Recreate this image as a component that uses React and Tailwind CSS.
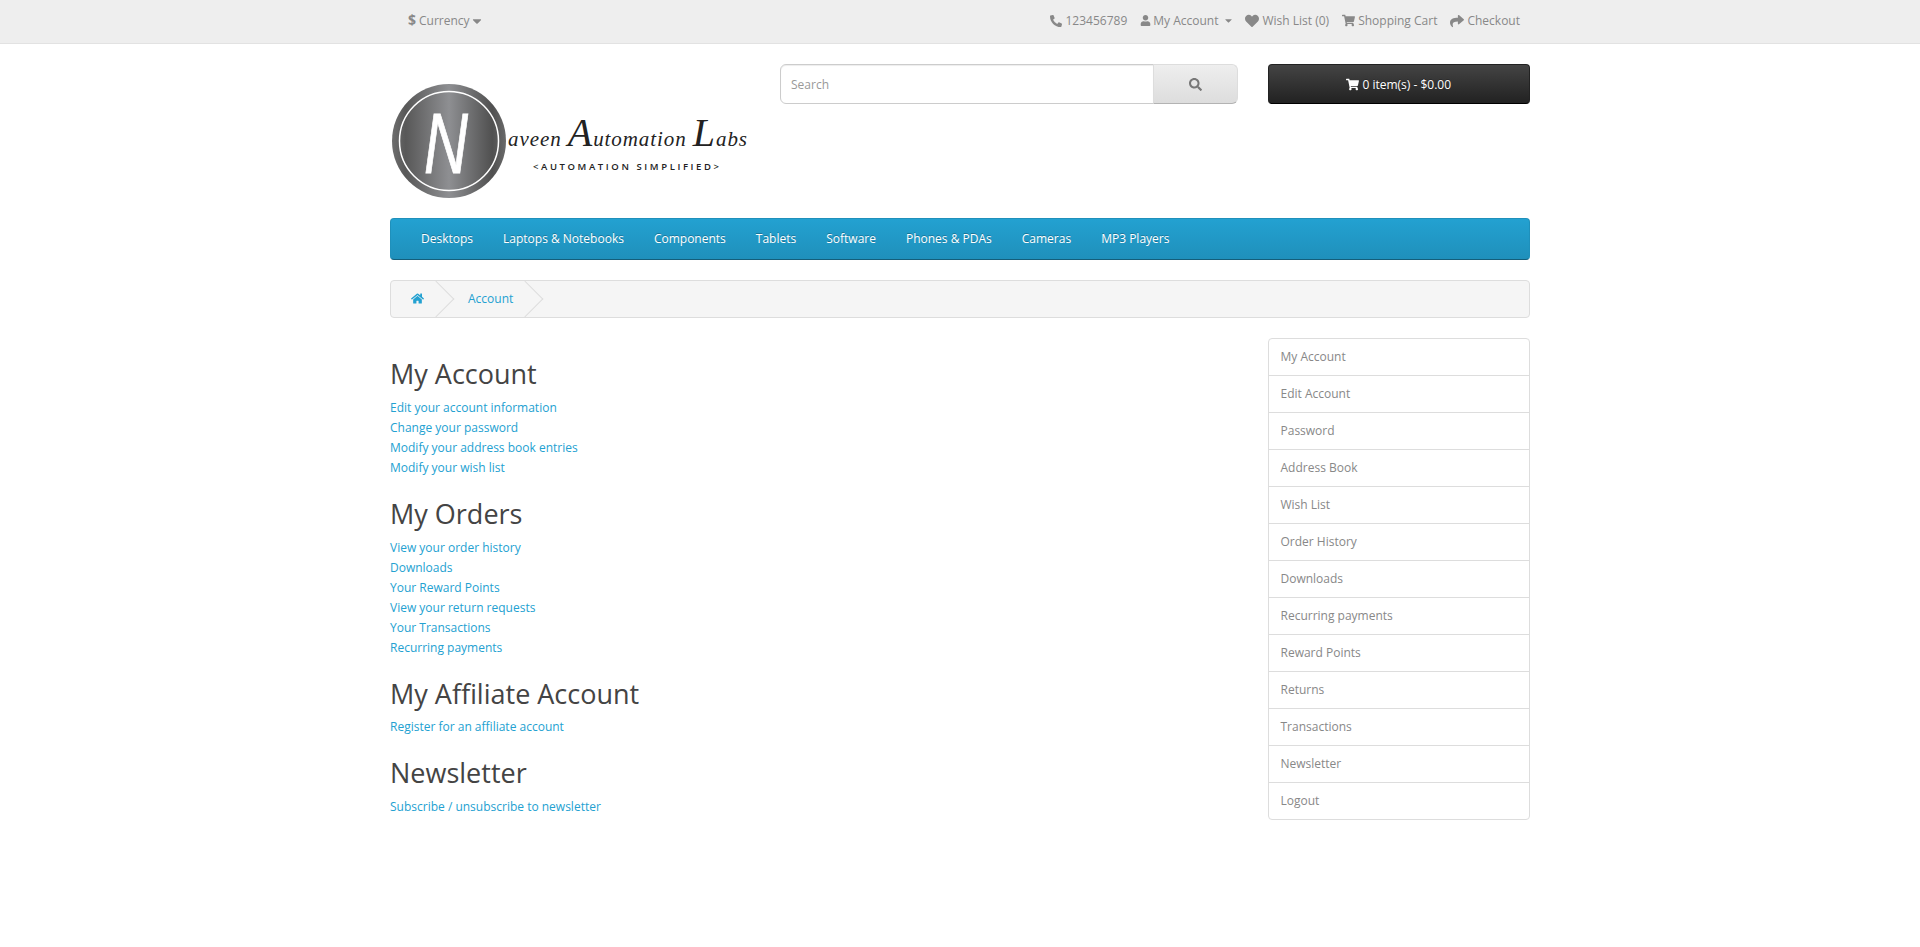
import React from 'react'
import { FaPhoneAlt, FaUser, FaHeart, FaShoppingCart, FaShare, FaSearch, FaHome, FaCaretDown } from 'react-icons/fa'

const navItems = ['Desktops', 'Laptops & Notebooks', 'Components', 'Tablets', 'Software', 'Phones & PDAs', 'Cameras', 'MP3 Players']

const sections = [
  { title: 'My Account', links: ['Edit your account information', 'Change your password', 'Modify your address book entries', 'Modify your wish list'] },
  { title: 'My Orders', links: ['View your order history', 'Downloads', 'Your Reward Points', 'View your return requests', 'Your Transactions', 'Recurring payments'] },
  { title: 'My Affiliate Account', links: ['Register for an affiliate account'] },
  { title: 'Newsletter', links: ['Subscribe / unsubscribe to newsletter'] },
]

const sideLinks = ['My Account', 'Edit Account', 'Password', 'Address Book', 'Wish List', 'Order History', 'Downloads', 'Recurring payments', 'Reward Points', 'Returns', 'Transactions', 'Newsletter', 'Logout']

const Logo = () => (
  <svg width="360" height="134" viewBox="0 0 360 134" className="block overflow-visible">
    <defs>
      <linearGradient id="metal" x1="0" y1="0" x2="1" y2="0">
        <stop offset="0" stopColor="#6e6e6e" />
        <stop offset="0.12" stopColor="#585858" />
        <stop offset="0.5" stopColor="#8e8f92" />
        <stop offset="0.88" stopColor="#505050" />
        <stop offset="1" stopColor="#6a6a6a" />
      </linearGradient>
    </defs>
    <circle cx="59" cy="77" r="57" fill="url(#metal)" />
    <circle cx="59" cy="77" r="49.5" fill="none" stroke="#ffffff" strokeWidth="1.5" />
    <text textAnchor="middle" fill="#ffffff" stroke="#ffffff" strokeWidth="0.8" fontFamily="'Liberation Sans', sans-serif" fontSize="78" fontStyle="italic" transform="translate(56 109) scale(0.78 1.1)">N</text>
    <text x="118" y="82" fill="#222222" fontFamily="'Liberation Serif', serif" fontSize="21" fontStyle="italic" textLength="239" lengthAdjust="spacing">
      aveen <tspan fontSize="40">A</tspan>utomation <tspan fontSize="40">L</tspan>abs
    </text>
    <text x="143" y="106" fill="#222222" fontFamily="'Open Sans', sans-serif" fontSize="9.5" fontWeight="600" textLength="186" lengthAdjust="spacing">{'<AUTOMATION SIMPLIFIED>'}</text>
  </svg>
)

const TopLink = ({ icon, children, className = '' }) => (
  <a className={`flex items-center gap-[3px] ${className}`}>
    {icon}
    <span>{children}</span>
  </a>
)

export default function App() {
  return (
    <div className="min-h-[947px] bg-white text-[12px] leading-[20px] text-[#666] font-['Open_Sans',sans-serif]">
      {/* Top bar */}
      <div className="h-[44px] bg-[#eee] border-b border-[#e2e2e2] text-[#888]">
        <div className="w-[1170px] mx-auto px-[15px] h-full flex items-center justify-between">
          <div className="flex items-center pl-[18px] pb-[1px]">
            <span className="text-[14px] font-bold mr-[3px] -mt-[2px]">$</span>
            <span>Currency</span>
            <FaCaretDown size={14} />
          </div>
          <div className="flex items-center gap-[13px] pr-[10px] pb-[2px]">
            <TopLink icon={<FaPhoneAlt size={12} />}>123456789</TopLink>
            <a className="flex items-center gap-[2px] -mr-[2px]">
              <FaUser size={11} />
              <span>My Account</span>
              <FaCaretDown size={11} className="ml-[3px]" />
            </a>
            <TopLink icon={<FaHeart size={14} />}>Wish List (0)</TopLink>
            <TopLink icon={<FaShoppingCart size={13} />}>Shopping Cart</TopLink>
            <TopLink icon={<FaShare size={14} />}>Checkout</TopLink>
          </div>
        </div>
      </div>

      <div className="w-[1170px] mx-auto px-[15px]">
        {/* Header */}
        <header className="flex pt-[20px] h-[174px]">
          <div className="w-[390px] shrink-0">
            <Logo />
          </div>
          <div className="w-[457.5px] shrink-0 flex h-[40px]">
            <input
              placeholder="Search"
              className="flex-1 min-w-0 h-[40px] px-[10px] text-[12px] text-[#555] placeholder:text-[#999] bg-white border border-[#ccc] rounded-l-[6px] shadow-[inset_0_1px_1px_rgba(0,0,0,0.075)] outline-none"
            />
            <button className="w-[85px] -ml-[1px] h-[40px] flex items-center justify-center text-[#777] bg-gradient-to-b from-[#eeeeee] to-[#dddddd] border border-[#ddd] border-b-[#b3b3b3] rounded-r-[6px]">
              <FaSearch size={13} />
            </button>
          </div>
          <div className="w-[262.5px] shrink-0 ml-[30px]">
            <button className="w-full h-[40px] pt-[1px] flex items-center justify-center gap-[3px] text-white bg-gradient-to-b from-[#444444] to-[#222222] border border-[#222] border-b-black rounded-[4px] [text-shadow:0_-1px_0_rgba(0,0,0,0.25)]">
              <FaShoppingCart size={13} />
              <span>0 item(s) - $0.00</span>
            </button>
          </div>
        </header>

        {/* Menu */}
        <nav className="h-[42px] mb-[20px] flex px-[15px] py-0 text-white bg-gradient-to-b from-[#23a1d1] to-[#1f90bb] border border-[#1f90bb] border-b-[#145e7a] rounded-[4px] [text-shadow:0_-1px_0_rgba(0,0,0,0.25)]">
          {navItems.map((item) => (
            <a key={item} className="px-[15px] py-[10px] whitespace-nowrap">{item}</a>
          ))}
        </nav>

        {/* Breadcrumb */}
        <ul className="h-[38px] mb-[20px] py-[8px] flex gap-[4px] bg-[#f5f5f5] border border-[#ddd] rounded-[4px] overflow-hidden text-[#23a1d1]">
          <li className="relative px-[20px] flex items-center">
            <FaHome size={13} className="-mt-[2px]" />
            <span className="absolute -top-[3px] -right-[5px] w-[26px] h-[26px] border-r border-b border-[#ddd] -rotate-45" />
          </li>
          <li className="relative px-[20px]">
            <a>Account</a>
            <span className="absolute -top-[3px] -right-[5px] w-[26px] h-[26px] border-r border-b border-[#ddd] -rotate-45" />
          </li>
        </ul>

        {/* Content */}
        <div className="flex">
          <main className="w-[847.5px] shrink-0 pt-[0.15px]">
            {sections.map((section) => (
              <section key={section.title}>
                <h2 className="pt-[21px] mb-[9px] text-[27px] leading-[1.1] font-normal text-[#444]">{section.title}</h2>
                <ul>
                  {section.links.map((link) => (
                    <li key={link}><a className="text-[#23a1d1]">{link}</a></li>
                  ))}
                </ul>
              </section>
            ))}
          </main>
          <aside className="w-[262.5px] shrink-0 ml-[30px] mb-[20px] self-start border border-[#ddd] rounded-[4px] text-[#888]">
            {sideLinks.map((link, i) => (
              <a key={link} className={`block px-[12px] py-[8px] ${i > 0 ? 'border-t border-[#ddd]' : ''}`}>{link}</a>
            ))}
          </aside>
        </div>
      </div>
    </div>
  )
}
